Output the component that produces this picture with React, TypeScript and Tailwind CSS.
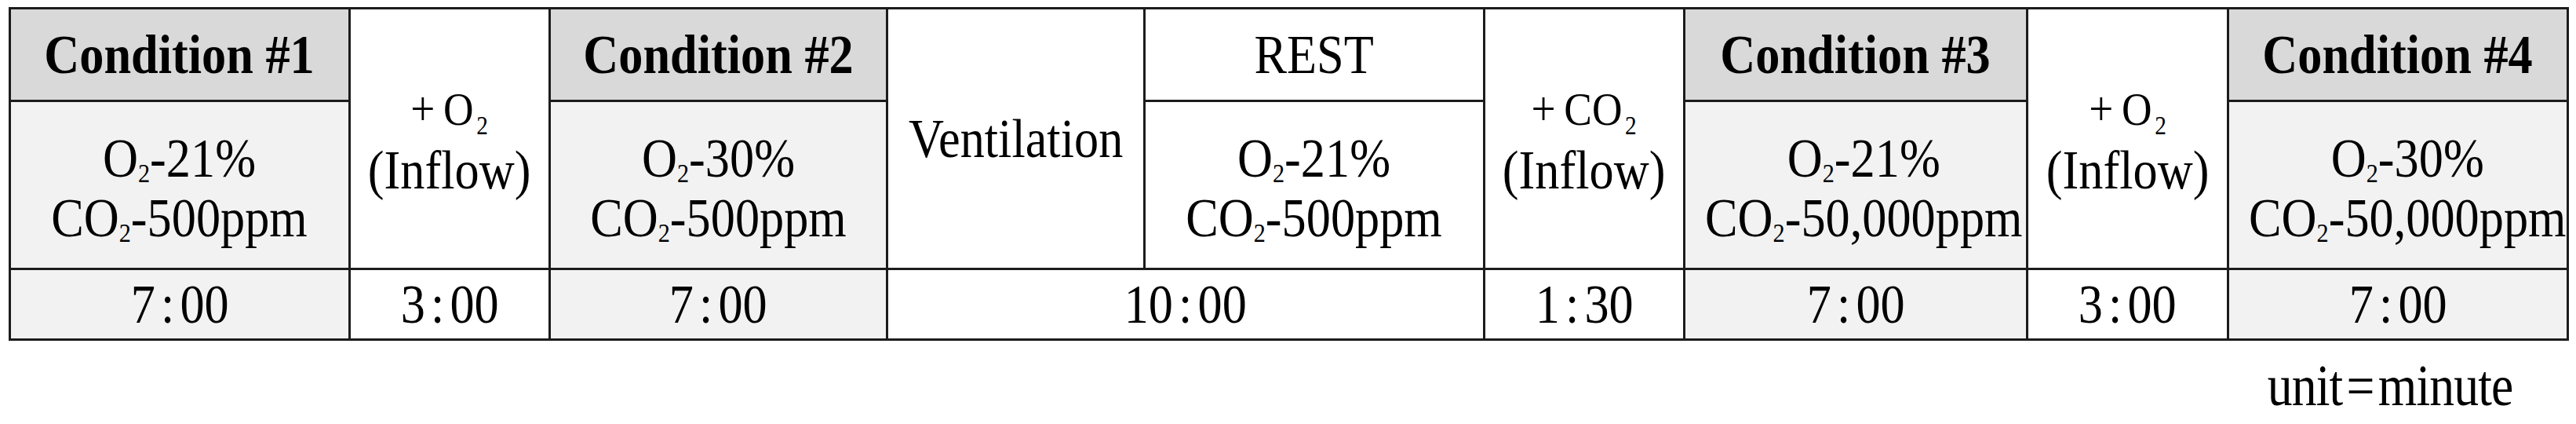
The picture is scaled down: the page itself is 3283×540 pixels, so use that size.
import React from 'react';

const Sub = ({ plus = false }: { plus?: boolean }) => (
  <sub className={plus ? 'ml-[4px] text-[33px] bottom-[-12px]' : 'text-[34px] bottom-[-7px]'}>2</sub>
);

// squeezed text, the figure is a bit narrower than plain Times
const T = ({ children }: { children: React.ReactNode }) => (
  <span className="inline-block scale-x-[0.89] whitespace-nowrap">{children}</span>
);

const border = 'border-[3px] border-[#1c1c1c] p-0 text-center align-middle';

function Mix({ o2, co2, bg }: { o2: string; co2: string; bg: string }) {
  return (
    <td className={`${border} ${bg}`}>
      <T>
        <div className="pt-[8px] leading-[76px]">
          <div>O<Sub />-{o2}</div>
          <div>CO<Sub />-{co2}</div>
        </div>
      </T>
    </td>
  );
}

function Inflow({ gas }: { gas: string }) {
  return (
    <td rowSpan={2} className={`${border} bg-white`}>
      <T>
        <div className="text-[60px] leading-[80px]">
          <span className="mr-[12px] text-[62px]">+</span>
          {gas}
          <Sub plus />
        </div>
        <div className="leading-[76px]">(Inflow)</div>
      </T>
    </td>
  );
}

function Time({ m, s, bg, span = 1 }: { m: string; s: string; bg: string; span?: number }) {
  return (
    <td colSpan={span} className={`${border} ${bg}`}>
      <T>
        {m}
        <span className="mx-[8px]">:</span>
        {s}
      </T>
    </td>
  );
}

export default function App() {
  const head = `${border} bg-[#d9d9d9] font-bold`;
  return (
    <div className="min-h-[540px] w-[3283px] bg-white pl-[11px] pt-[9px] [font-family:'Liberation_Serif',serif] text-[70px] text-black">
      <table className="w-[3260px] table-fixed border-collapse leading-[76px]">
        <colgroup>
          <col className="w-[433px]" />
          <col className="w-[255px]" />
          <col className="w-[430px]" />
          <col className="w-[328px]" />
          <col className="w-[433px]" />
          <col className="w-[255px]" />
          <col className="w-[437px]" />
          <col className="w-[256px]" />
          <col className="w-[433px]" />
        </colgroup>
        <tbody>
          <tr className="h-[118px]">
            <td className={head}><T>Condition #1</T></td>
            <Inflow gas="O" />
            <td className={head}><T>Condition #2</T></td>
            <td rowSpan={2} className={`${border} bg-white`}><T>Ventilation</T></td>
            <td className={`${border} bg-white`}><T>REST</T></td>
            <Inflow gas="CO" />
            <td className={head}><T>Condition #3</T></td>
            <Inflow gas="O" />
            <td className={head}><T>Condition #4</T></td>
          </tr>
          <tr className="h-[214px]">
            <Mix o2="21%" co2="500ppm" bg="bg-[#f2f2f2]" />
            <Mix o2="30%" co2="500ppm" bg="bg-[#f2f2f2]" />
            <Mix o2="21%" co2="500ppm" bg="bg-white" />
            <Mix o2="21%" co2="50,000ppm" bg="bg-[#f2f2f2]" />
            <Mix o2="30%" co2="50,000ppm" bg="bg-[#f2f2f2]" />
          </tr>
          <tr className="h-[90px]">
            <Time m="7" s="00" bg="bg-[#f2f2f2]" />
            <Time m="3" s="00" bg="bg-white" />
            <Time m="7" s="00" bg="bg-[#f2f2f2]" />
            <Time m="10" s="00" bg="bg-white" span={2} />
            <Time m="1" s="30" bg="bg-white" />
            <Time m="7" s="00" bg="bg-[#f2f2f2]" />
            <Time m="3" s="00" bg="bg-white" />
            <Time m="7" s="00" bg="bg-[#f2f2f2]" />
          </tr>
        </tbody>
      </table>
      <div className="mt-[17px] flex justify-end pr-[81px] text-[74px] leading-[80px]">
        <span className="inline-block origin-right scale-x-[0.86] tracking-[-1px] whitespace-nowrap">
          unit<span className="mx-[6px]">=</span>minute
        </span>
      </div>
    </div>
  );
}
